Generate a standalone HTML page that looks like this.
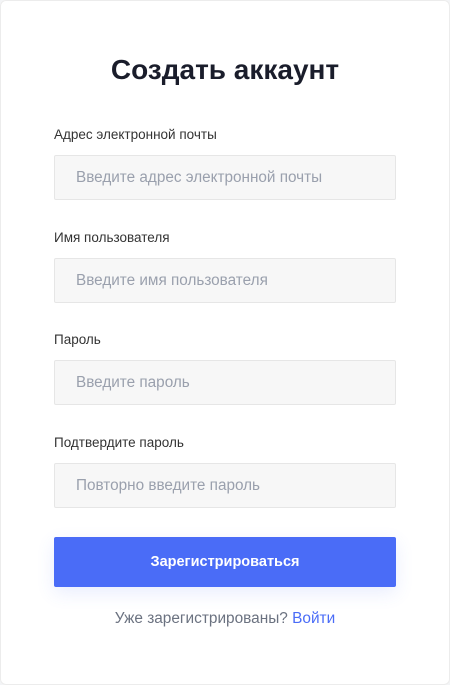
<!DOCTYPE html>
<html><head><meta charset="utf-8"><style>
*{box-sizing:border-box;margin:0;padding:0}
body{width:450px;height:685px;background:#f3f4f6;font-family:"Liberation Sans","DejaVu Sans",sans-serif;overflow:hidden}
.card{position:absolute;left:0;top:0;width:450px;height:685px;background:#fff;box-shadow:inset 0 0 0 1px #ececec;border-radius:6px}
h1{position:absolute;top:54px;left:0;width:100%;text-align:center;font-size:28px;font-weight:bold;color:#1a1d2b}
.lbl{position:absolute;left:54px;font-size:13.5px;color:#333}
.inp{position:absolute;left:54px;width:342px;height:45px;background:#f7f7f7;border:1px solid #e6e6e6;border-radius:2px;padding-left:21px;line-height:43px;font-size:15.3px;color:#9aa0ad}
.btn{position:absolute;left:54px;top:537px;width:342px;height:50px;background:#4a6cf7;border-radius:2px;color:#fff;font-weight:bold;font-size:14.5px;text-align:center;line-height:50px;box-shadow:0 6px 18px rgba(74,108,247,.12)}
.ft{position:absolute;top:610px;left:0;width:100%;text-align:center;font-size:15.4px;color:#6b7280}
.ft span{color:#4a6cf7}
</style></head><body><div class="card">
<h1>Создать аккаунт</h1>
<div class="lbl" style="top:127px">Адрес электронной почты</div>
<div class="inp" style="top:155px">Введите адрес электронной почты</div>
<div class="lbl" style="top:230px">Имя пользователя</div>
<div class="inp" style="top:258px">Введите имя пользователя</div>
<div class="lbl" style="top:332px">Пароль</div>
<div class="inp" style="top:360px">Введите пароль</div>
<div class="lbl" style="top:435px">Подтвердите пароль</div>
<div class="inp" style="top:463px">Повторно введите пароль</div>
<div class="btn">Зарегистрироваться</div>
<div class="ft">Уже зарегистрированы? <span>Войти</span></div>
</div></body></html>
